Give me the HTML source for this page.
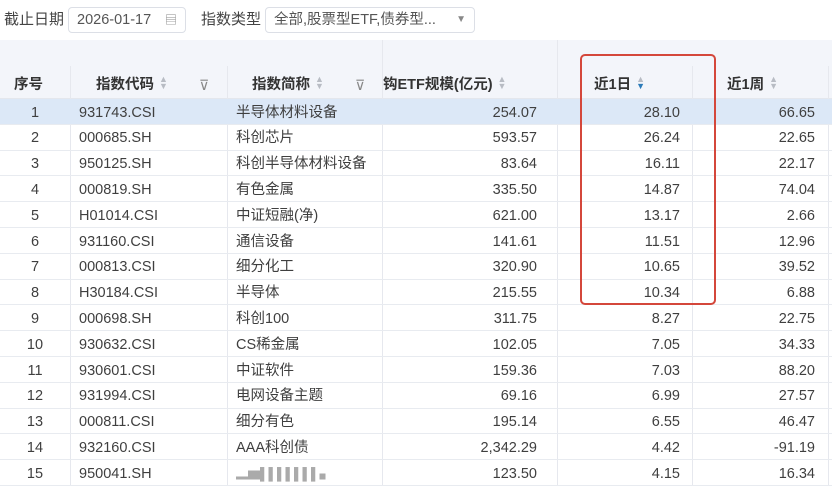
<!DOCTYPE html>
<html><head><meta charset="utf-8"><style>
*{margin:0;padding:0;box-sizing:border-box}
body{width:832px;height:486px;overflow:hidden;background:#fff;font-family:"Liberation Sans","Noto Sans CJK SC",sans-serif;color:#3f3f3f;position:relative}
.top{position:absolute;left:0;top:0;width:832px;height:40px;background:#fff}
.lbl{position:absolute;top:9px;font-size:15px;line-height:22px;color:#444}
.box{position:absolute;top:7px;height:26px;border:1px solid #dcdfe6;border-radius:4px;font-size:14.5px;line-height:24px;padding:0 8px;color:#555}
.hdr{position:absolute;left:0;top:40px;width:832px;height:59px;background:#f3f5fa;border-bottom:1px solid #e4e7ed}
.hc{position:absolute;top:34px;font-size:14.5px;line-height:22px;font-weight:bold;color:#333}
.vl{position:absolute;width:1px;background:#e6e8ee}
.row{position:absolute;left:0;width:832px;height:25.8px;border-bottom:1px solid #e8ebf0;font-size:14.5px}
.row span{position:absolute;top:1.5px;line-height:25px;height:25px}
.r{text-align:right}
.sort{display:inline-block;color:#b8bcc4;font-size:9px;line-height:7px;vertical-align:middle;margin-left:5px;position:relative;top:-2px}
</style></head><body>
<div class="top">
<div class="lbl" style="left:4px">截止日期</div>
<div class="box" style="left:68px;width:118px">2026-01-17 <span style="position:absolute;right:8px;top:0;color:#888;font-size:12px">▤</span></div>
<div class="lbl" style="left:201px">指数类型</div>
<div class="box" style="left:265px;width:210px">全部,股票型ETF,债券型... <span style="position:absolute;right:8px;top:0;color:#888;font-size:10px">▼</span></div>
</div>
<div class="hdr">
<div class="hc" style="left:14px">序号</div>
<div class="hc" style="left:96px">指数代码<span class="sort">▲<br>▼</span></div>
<div style="position:absolute;left:199px;top:34px;line-height:22px;color:#888;font-size:14px">⊽</div>
<div class="hc" style="left:252px">指数简称<span class="sort">▲<br>▼</span></div>
<div style="position:absolute;left:355px;top:34px;line-height:22px;color:#888;font-size:14px">⊽</div>
<div class="hc" style="left:383px">钩ETF规模(亿元)<span class="sort">▲<br>▼</span></div>
<div class="hc" style="left:594px">近1日<span class="sort"><span style="color:#b8bcc4">▲</span><br><span style="color:#2b7bb9">▼</span></span></div>
<div class="hc" style="left:727px">近1周<span class="sort">▲<br>▼</span></div>
</div>
<div class="vl" style="left:382px;top:40px;height:446px"></div>
<div class="vl" style="left:557px;top:40px;height:446px"></div>
<div class="vl" style="left:70px;top:66px;height:420px"></div>
<div class="vl" style="left:227px;top:66px;height:420px"></div>
<div class="vl" style="left:692px;top:66px;height:420px"></div>
<div class="vl" style="left:828px;top:66px;height:420px"></div>
<div id="rows"></div>
<div style="position:absolute;left:580px;top:54px;width:136px;height:251px;border:2.5px solid #d4473b;border-radius:5px"></div>
<script>
var d=[["1","931743.CSI","半导体材料设备","254.07","28.10","66.65"],["2","000685.SH","科创芯片","593.57","26.24","22.65"],["3","950125.SH","科创半导体材料设备","83.64","16.11","22.17"],["4","000819.SH","有色金属","335.50","14.87","74.04"],["5","H01014.CSI","中证短融(净)","621.00","13.17","2.66"],["6","931160.CSI","通信设备","141.61","11.51","12.96"],["7","000813.CSI","细分化工","320.90","10.65","39.52"],["8","H30184.CSI","半导体","215.55","10.34","6.88"],["9","000698.SH","科创100","311.75","8.27","22.75"],["10","930632.CSI","CS稀金属","102.05","7.05","34.33"],["11","930601.CSI","中证软件","159.36","7.03","88.20"],["12","931994.CSI","电网设备主题","69.16","6.99","27.57"],["13","000811.CSI","细分有色","195.14","6.55","46.47"],["14","932160.CSI","AAA科创债","2,342.29","4.42","-91.19"],["15","950041.SH","▂▆▌▌▌▌▌▌▌▖","123.50","4.15","16.34"]];
var h="";d.forEach(function(r,i){var t=99+i*25.8;
h+='<div class="row" style="top:'+t+'px;'+(i==0?'background:#dce8f7':'')+'"><span style="left:0;width:70px;text-align:center">'+r[0]+'</span><span style="left:79px">'+r[1]+'</span><span style="left:236px'+(i==14?';color:#aaa;font-size:12px':'')+'">'+r[2]+'</span><span class="r" style="left:400px;width:137px">'+r[3]+'</span><span class="r" style="left:560px;width:120px">'+r[4]+'</span><span class="r" style="left:700px;width:115px">'+r[5]+'</span></div>';});
document.getElementById("rows").innerHTML=h;
</script>
</body></html>
